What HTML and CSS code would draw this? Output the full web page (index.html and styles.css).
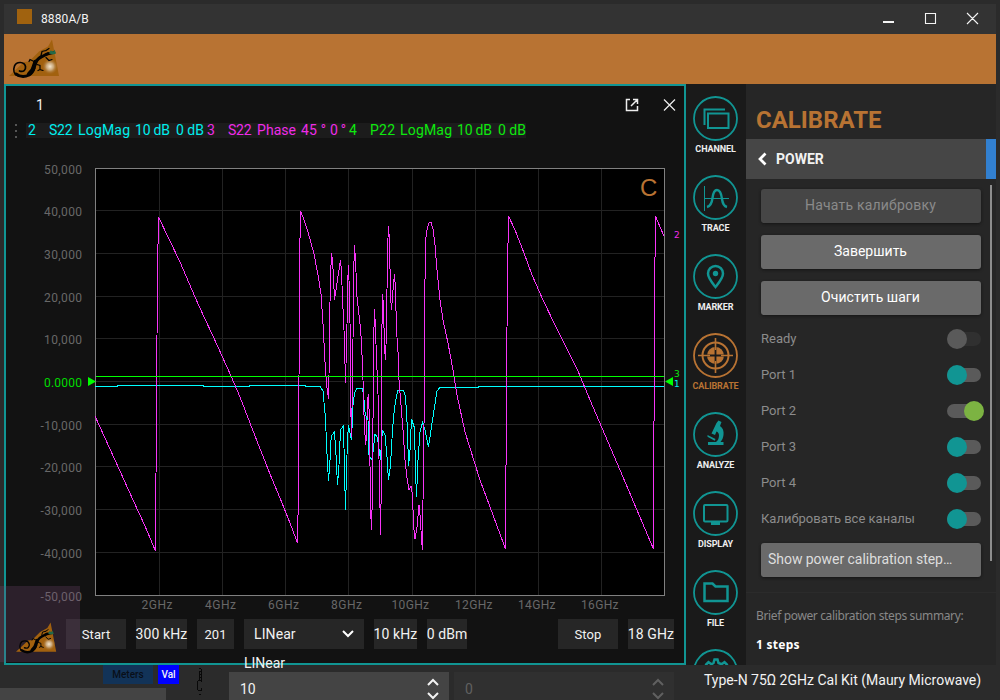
FILE: index.html
```html
<!DOCTYPE html>
<html lang="en">
<head>
<meta charset="utf-8">
<title>8880A/B</title>
<link rel="stylesheet" href="styles.css">
</head>
<body>
<svg class="defs" aria-hidden="true">
  <symbol id="gecko" viewBox="0 0 51 40">
    <path class="hill" d="M0 36.5 L8 29 L15 22.5 L20 22 L30 12 L39 7 L43 0 L50 36.5Z"/>
    <circle cx="41" cy="27" r="8" fill="url(#orb)"/>
    <g class="lizard">
      <path d="M10.500 31.500c4 1.500 6.500-1 6-4.500c-1-5-9-5.500-11-.5c-1.500 4-.5 8 3 9.500" stroke-width="1.700"/>
      <path d="M7 34.500q6 4.500 13 1q4-2.500 5-7" stroke-width="3"/>
      <path d="M20 34.500q4.500-4 5-8l1.500-4" stroke-width="4.200"/>
      <path d="M26 23.500q3-5 7-6.500l6-3" stroke-width="3"/>
      <path d="M25 22l-4-2l-1 2M28 25l3 1v4l3 1M31 30l-2 1M32 16l1-4l4-1M37 11l3-2M37 18l3 3l3-1" stroke-width="1.200"/>
      <path d="M37 15l8-2" stroke-width="2.600"/>
    </g>
    <path class="leaf" d="M40 14l1.500-3 3 1 1-2 1.500 4-3 1z"/>
  </symbol>
  <radialGradient id="orb"><stop offset="0" stop-color="#f4e6cd"/><stop offset=".45" stop-color="#c9a679"/><stop offset="1" stop-color="#a2651c" stop-opacity="0"/></radialGradient>
</svg>
<div class="window">
  <header class="titlebar">
    <span class="app-icon"></span><span class="title">8880A/B</span>
    <svg class="win-buttons" width="98" height="16" viewBox="0 0 98 16"><path d="M43.500 3.500h10v10h-10zM85 3l11 11M96 3l-11 11"/><path class="min" d="M1 12h11"/></svg>
  </header>
  <div class="banner"><svg class="logo"><use href="#gecko"/></svg></div>
  <main class="main">
    <section class="channel">
      <div class="channel-head">
        <span class="channel-no">1</span>
        <svg width="54" height="16" viewBox="0 0 54 16"><path class="ic" d="M6 2.500H2.500V13.500H13.500V9M9 2.500h4.500V7M13 3L7 9"/><path class="ic thin" d="M40 2.500l11 11M51 2.500l-11 11"/></svg>
      </div>
      <div class="traces">
        <svg width="4" height="14" class="grip"><path d="M1 0h2v2H1zM1 6h2v2H1zM1 12h2v2H1z"/></svg>
        <svg class="trace-line" width="500" height="15" viewBox="26 0 500 15">
          <g class="t-cyan"><text x="28" y="11.500" textLength="8">2</text><text x="49" y="11.500" textLength="23.500">S22</text><text x="78" y="12" textLength="52">LogMag</text><text x="135" y="11.500" textLength="35">10 dB</text><text x="176" y="11.500" textLength="28">0 dB</text></g>
          <g class="t-mag"><text x="207" y="11.500" textLength="8">3</text><text x="228" y="11.500" textLength="23.500">S22</text><text x="257" y="12" textLength="39">Phase</text><text x="301" y="11.500" textLength="25">45 °</text><text x="330" y="11.500" textLength="16">0 °</text></g>
          <g class="t-green"><text x="349" y="11.500" textLength="8">4</text><text x="370" y="11.500" textLength="25">P22</text><text x="400" y="12" textLength="52">LogMag</text><text x="457" y="11.500" textLength="35">10 dB</text><text x="498" y="11.500" textLength="28">0 dB</text></g>
        </svg>
      </div>
      <svg class="chart" width="678" height="460" viewBox="6 155 678 460">
        <rect x="95.500" y="168.500" width="569" height="427" fill="#000"/>
        <path class="grid" d="M159.500 169v426M222.500 169v426M285.500 169v426M348.500 169v426M412.500 169v426M475.500 169v426M538.500 169v426M601.500 169v426M96 210.500h568M96 253.500h568M96 296.500h568M96 338.500h568M96 381.500h568M96 424.500h568M96 466.500h568M96 509.500h568M96 552.500h568"/>
        <rect class="frame" x="95.500" y="168.500" width="569" height="427"/>
        <polyline class="line cyan" points="95,386.500 117,386.500 117,385.500 203,385.500 203,386.500 249,386.500 250,385.500 305,385.500 306,386.500 320,386.500 323,391 324.500,408 325.500,418 326.500,444 327.500,463 328.500,481 329.700,466 331,440 332,435 334.500,432 336,455 337.500,485 339,465 340.500,430 342,428 343.500,425 344.500,470 345.500,510 346.500,470 347.500,440 348.500,425 350,433 351.500,440 353,405 354.500,393 357,388.500 362,388.500 363.500,394 365,412 367,420 367.500,403 368,420 369,455 370,457 372,460 373.500,448 375,434 377,437 378.500,445 380.500,460 381.500,440 382.700,431 385,435 387,457 388.500,480 390.500,465 392.500,430 394.500,408 397.500,391 403.500,390.500 405.500,396 407.500,430 408.500,466 410,450 411.500,419 414.500,428 415.500,470 416.500,497 418,460 420,432 422.700,422 425.500,432 428.500,447 431,430 434,410 437,391 440,387.500 478,387.500 478,386.500 664,386.500"/>
        <polyline class="line mag" points="95,416 105,438 120,471 133,500 145,526 155.500,551 156.500,400 157.500,273 158.500,217 169,239 180,262 195,297 205,319 213,336 231,376 240,397 255,436 270,474 280,498 290,523 297.500,543 298.500,489 299.500,267 300.500,211 303,217 308,232 314,254 318,275 321,294 323,324 325.500,371 327,388 328.500,399 329,376 329.500,327 330.500,278 331.500,253 332.500,260 333.500,277 334.500,300 337,283 339,270 340.500,260 341.500,272 342.500,298 344,330 345,364 345.500,383 347,325 347.500,285 348.500,265 349.500,295 350.500,350 350.800,408 351.500,437 352.500,380 353,340 353.500,278 354.500,245 355.500,260 357,297 360,324 361.500,342 363,380 364,415 365.500,445 366.500,438 367.500,400 368.500,394 369.500,423 370.500,508 371.500,530 372.500,490 373,420 373.500,346 374.500,309 375.500,328 376.500,360 377.500,380 378.500,408 379,459 380,508 380.500,535 381.500,475 381.500,355 382.500,294 383.500,306 384.500,348 385.500,360 386.500,330 387.500,250 388.500,226 389.500,241 390.500,295 391.500,310 393,290 394.500,274 395.500,290 396.500,330 398,352 399,380 401,405 403,430 405,460 407,478 409,490 411,486 412.500,495 413.500,525 415,539 417,527 419,505 420.500,520 421.500,540 422.500,550 423,500 423.500,470 424.500,380 424.800,296 425.500,241 427,230 428.700,223 431,222.500 433,229 435,245 437,270 440,300 443,320 448,343 453,370 457,395 465,432 480,480 493,515 505.500,549 506.500,385 507.500,272 508.500,216 515,230 524,253 532,275 543,300 555,325 565,345 578,371 590,400 620,470 653.500,549 654.500,300 655.500,216 660,227 664,236"/>
        <path class="line green" d="M96 376.500h568"/>
        <path class="arrow" d="M88 377v9l8-4.500zM673 377v9l-8-4.500z"/>
        <g class="axis y">
          <text x="44" y="173.500" textLength="38">50,000</text><text x="44" y="216" textLength="38">40,000</text><text x="44" y="259" textLength="38">30,000</text><text x="44" y="301.500" textLength="38">20,000</text><text x="44" y="344" textLength="38">10,000</text><text class="zero" x="44" y="387" textLength="38">0.0000</text><text x="40.500" y="429.500" textLength="41.500">-10,000</text><text x="40.500" y="472" textLength="41.500">-20,000</text><text x="40.500" y="515" textLength="41.500">-30,000</text><text x="40.500" y="557.500" textLength="41.500">-40,000</text><text x="40.500" y="600.500" textLength="41.500">-50,000</text>
        </g>
        <g class="axis x">
          <text x="141.500" y="609" textLength="31">2GHz</text><text x="205" y="609" textLength="31">4GHz</text><text x="268" y="609" textLength="31">6GHz</text><text x="331" y="609" textLength="31">8GHz</text><text x="391.500" y="609" textLength="37.500">10GHz</text><text x="455" y="609" textLength="37.500">12GHz</text><text x="518" y="609" textLength="37.500">14GHz</text><text x="581" y="609" textLength="37.500">16GHz</text>
        </g>
        <text class="corr" x="640" y="196">C</text>
        <g class="tags"><text class="t-mag" x="674" y="238">2</text><text class="t-green" x="674" y="377">3</text><text class="t-cyan" x="674" y="387">1</text></g>
      </svg>
      <div class="controls">
        <span class="key w60">Start</span><span class="key w51">300 kHz</span><span class="key w37">201</span>
        <span class="key select">LINear<svg width="14" height="10"><path d="M2 2l5 5 5-5"/></svg></span>
        <span class="key w43">10 kHz</span><span class="key w40">0 dBm</span><span class="key w60 push">Stop</span><span class="key w46">18 GHz</span>
      </div>
    </section>
    <nav class="nav">
      <div class="item"><svg viewBox="0 0 45 45"><circle class="ring" cx="22.500" cy="22.500" r="21.500"/><path class="o" d="M11.500 29V13.500H32M15 17.500h20.500v14.500H15z"/></svg><span>CHANNEL</span></div>
      <div class="item"><svg viewBox="0 0 45 45"><circle class="ring" cx="22.500" cy="22.500" r="21.500"/><path class="o fine" d="M11.500 11v25M11 23.500h25"/><path class="o bold" d="M14 32c4-1 5-5 5.500-9s1.500-8 4.500-8 4.500 5 5 9 1.500 7 5 8"/></svg><span>TRACE</span></div>
      <div class="item"><svg viewBox="0 0 45 45"><circle class="ring" cx="22.500" cy="22.500" r="21.500"/><path class="o mid" d="M22.500 33c-4-5-7.500-9-7.500-13.500a7.500 7.500 0 0 1 15 0c0 4.500-3.500 8.500-7.500 13.500z"/><circle class="f" cx="22.500" cy="19.500" r="2.700"/></svg><span>MARKER</span></div>
      <div class="item active"><svg viewBox="0 0 45 45"><circle class="ring" cx="22.500" cy="22.500" r="21.500"/><circle class="o" cx="22.500" cy="22.500" r="13"/><circle class="f" cx="22.500" cy="22.500" r="8.500"/><path class="gap" d="M22.500 13v19M13 22.500h19"/><path class="o thinner" d="M22.500 5v12M22.500 28v12M5 22.500h12M28 22.500h12"/></svg><span>CALIBRATE</span></div>
      <div class="item"><svg viewBox="0 0 45 45"><circle class="ring" cx="22.500" cy="22.500" r="21.500"/><path class="f" d="M25.500 8.500l3 1.500-1.500 4c3 2 4 5 3.500 9-.3 3-1.500 5-3 7h3v3H15v-3h8c2-1.500 3-4 3-6.500 0-2-1-3.500-2.500-4l-1.500 3.500-3.500-1.500 5-10.500zM14.500 23l8 4-.8 1.800-7.200-4z"/></svg><span>ANALYZE</span></div>
      <div class="item"><svg viewBox="0 0 45 45"><circle class="ring" cx="22.500" cy="22.500" r="21.500"/><rect class="o" x="11" y="14" width="23.500" height="16.500" rx="1"/><path class="f" d="M18 31h9v3h-9z"/></svg><span>DISPLAY</span></div>
      <div class="item"><svg viewBox="0 0 45 45"><circle class="ring" cx="22.500" cy="22.500" r="21.500"/><path class="o mid" d="M11.500 13.500h8l3 3h12V31h-23z"/></svg><span>FILE</span></div>
      <div class="item"><svg viewBox="0 0 45 45"><circle class="ring" cx="22.500" cy="22.500" r="21.500"/><path class="o mid" d="M20.500 14l1-3.500h3l1 3.500 3 1.200 3-2 2.300 2.300-2 3 1.200 3 3 1v3h-25v-3l3-1 1.200-3-2-3 2.300-2.300 3 2z"/></svg></div>
    </nav>
    <aside class="panel">
      <h1>CALIBRATE</h1>
      <div class="crumb"><svg width="12" height="16" viewBox="0 0 12 16"><path d="M9.500 2.500L4 8l5.500 5.500"/></svg><span>POWER</span><i></i></div>
      <div class="scroll">
        <div class="form">
          <button class="btn off">Начать калибровку</button>
          <button class="btn">Завершить</button>
          <button class="btn last">Очистить шаги</button>
          <div class="row"><span>Ready</span><i class="toggle dim"></i></div>
          <div class="row"><span>Port 1</span><i class="toggle"></i></div>
          <div class="row"><span>Port 2</span><i class="toggle on"></i></div>
          <div class="row"><span>Port 3</span><i class="toggle"></i></div>
          <div class="row"><span>Port 4</span><i class="toggle"></i></div>
          <div class="row"><span>Калибровать все каналы</span><i class="toggle"></i></div>
          <button class="btn soft">Show power calibration step…</button>
        </div>
        <i class="bar"></i>
      </div>
      <div class="summary"><p>Brief power calibration steps summary:</p><b>1 steps</b></div>
    </aside>
  </main>
  <footer class="footer">
    <div class="foot-left">
      <div class="chips"><span class="chip meters">Meters</span><span class="chip val">Val</span></div>
      <div class="strip"></div>
    </div>
    <svg class="probe" width="12" height="32"><path d="M5 3.500h2M7.500 4v2M5.500 7v9M7.500 6v11M5 6.500h3M5 9.500h3M5 12.500h3M4 15.500h4M3.500 16v9M4 25.500h3M7.500 23v3M5 29.500h2"/></svg>
    <div class="spin">10<svg width="14" height="26"><path d="M2 9l5-5 5 5M2 17l5 5 5-5"/></svg></div>
    <div class="spin idle">0<svg width="14" height="26"><path d="M2 9l5-5 5 5M2 17l5 5 5-5"/></svg></div>
    <div class="kit">Type-N 75Ω 2GHz Cal Kit (Maury Microwave)</div>
  </footer>
  <div class="float-label">LINear</div>
  <div class="ghost"><svg><use href="#gecko"/></svg></div>
</div>
</body>
</html>
```
FILE: styles.css
```css
* { box-sizing: border-box; }
body { margin: 0; font-family: Roboto, "Liberation Sans", sans-serif; font-size: 14px; color: #f2f2f2; background: #2b2b2b; overflow: hidden; }
.defs { position: absolute; width: 0; height: 0; }
.window { position: relative; width: 1000px; height: 700px; padding: 4px 4px 0; display: flex; flex-direction: column; overflow: hidden; }
.titlebar { height: 30px; flex: none; background: #333; display: flex; align-items: center; padding: 0 16px 0 13px; font-size: 12px; }
.app-icon { width: 15px; height: 15px; background: #a0620f; margin: -5px 9px 0 0; }
.title { letter-spacing: .1px; }
.win-buttons { margin-left: auto; margin-top: -2px; }
.win-buttons path { fill: none; stroke: #f4f4f4; stroke-width: 1.1; }
.win-buttons .min { stroke-width: 2; }
.banner { height: 50px; flex: none; background: #b87333; padding: 5px; }
.logo { width: 51px; height: 41px; display: block; }
.hill { fill: #a2610f; }
.lizard { fill: none; stroke: #030303; stroke-linecap: round; }
.leaf { fill: #246a49; }
.main { height: 581px; flex: none; display: grid; grid-template-columns: 682px 60px 250px; grid-template-rows: 581px; }
.channel { border: 2px solid #119593; background: #121212; display: flex; flex-direction: column; min-width: 0; }
.channel-head { height: 36px; flex: none; display: flex; justify-content: space-between; align-items: center; padding: 2px 6px 0 30px; }
.ic { fill: none; stroke: #eee; stroke-width: 1.5; }
.thin { stroke-width: 1.2; }
.traces { height: 33px; flex: none; display: flex; align-items: flex-start; padding: 1px 0 0 8px; gap: 8px; }
.grip { fill: #555; margin-top: 1px; }
.trace-line { background: #1c1c1c; overflow: visible; font-size: 14px; }
.t-cyan { fill: #00eeee; }
.t-mag { fill: #ef2ce8; }
.t-green { fill: #0ee80e; }
.chart { flex: none; display: block; }
.grid { stroke: #222; fill: none; shape-rendering: crispEdges; }
.frame { fill: none; stroke: #808080; shape-rendering: crispEdges; }
.line { fill: none; stroke-width: 1; shape-rendering: crispEdges; }
.cyan { stroke: #0ff; }
.mag { stroke: #f734f7; }
.green { stroke: #0f0; }
.arrow { fill: #0f0; }
.axis { font-size: 12px; fill: #686868; }
.zero { fill: #0d0; }
.corr { font: 24px "Liberation Sans", sans-serif; fill: #b87333; }
.tags { font: 9px "DejaVu Sans", sans-serif; }
.controls { display: flex; gap: 10px; padding: 4px 10px 0 60px; }
.key { height: 30px; background: #262626; display: flex; align-items: center; justify-content: center; white-space: nowrap; letter-spacing: .1px; }
.w60 { width: 60px; font-size: 13px; }
.w51 { width: 51px; }
.w37 { width: 37px; font-size: 13px; }
.w43 { width: 43px; }
.w40 { width: 40px; }
.w46 { width: 46px; }
.push { margin-left: auto; }
.select { width: 120px; justify-content: space-between; padding: 0 9px 0 10px; }
.select path { fill: none; stroke: #fff; stroke-width: 2; }
.nav { background: #1a1a1a; overflow: hidden; padding-top: 12px; }
.item { height: 79px; display: flex; flex-direction: column; align-items: center; color: #119593; font-size: 9px; font-weight: 700; letter-spacing: -.1px; padding-right: 1px; }
.item svg { width: 45px; height: 45px; flex: none; }
.item span { color: #eee; margin-top: 3px; line-height: 11px; }
.active, .active span { color: #b87333; }
.ring, .o { fill: none; stroke: currentColor; stroke-width: 2; }
.ring { stroke-width: 1.8; }
.fine { stroke-width: 1; }
.mid { stroke-width: 2.5; }
.bold { stroke-width: 2.4; }
.thinner { stroke-width: 1.6; }
.f { fill: currentColor; }
.gap { stroke: #1a1a1a; stroke-width: 1.8; }
.panel { background: #262626; display: flex; flex-direction: column; overflow: hidden; }
h1 { margin: 0; height: 55px; flex: none; padding: 22px 0 0 10px; font-size: 24px; line-height: 28px; font-weight: 700; color: #b87333; }
.crumb { height: 40px; flex: none; background: #464646; display: flex; align-items: center; padding-left: 10px; font-weight: 700; font-size: 14px; }
.crumb svg path { fill: none; stroke: #fff; stroke-width: 2.7; }
.crumb span { margin-left: 8px; }
.crumb i { width: 10px; height: 40px; margin-left: auto; background: #3280d0; }
.scroll { height: 414px; flex: none; display: flex; border-bottom: 1px solid #2b2b2b; }
.form { width: 235px; padding: 10px 0 0 15px; }
.bar { width: 2px; height: 376px; margin: 6px 0 0 9px; background: #8e8e8e; }
.btn { display: block; width: 220px; height: 34px; margin: 0 0 12px; padding: 0 1px 2px 0; border: 0; border-radius: 3px; background: #6a6a6a; color: #fff; font: 14px Roboto, sans-serif; box-shadow: 0 1px 3px #151515; }
.off { background: #464646; color: #8a8a8a; letter-spacing: .2px; }
.last { margin-bottom: 6px; letter-spacing: .05px; }
.soft { margin-top: 6px; color: #ddd; white-space: nowrap; text-align: left; padding-left: 7px; letter-spacing: -.04px; }
.row { height: 36px; display: flex; align-items: center; justify-content: space-between; color: #8c8c8c; font-size: 13px; padding-bottom: 1px; }
.toggle { width: 34px; height: 14px; border-radius: 7px; background: #5a5a5a; display: flex; align-items: center; margin-top: 1px; }
.toggle::before { content: ""; width: 20px; height: 20px; flex: none; border-radius: 50%; background: #119593; }
.on::before { background: #7cb342; margin-left: 17px; }
.dim { background: #303030; }
.dim::before { background: #5a5a5a; }
.summary { padding: 14px 10px 0; font: 12px "Noto Sans", sans-serif; }
.summary p { margin: 0 0 12px; line-height: 17px; color: #888; letter-spacing: -.36px; white-space: nowrap; }
.summary b { line-height: 17px; color: #fff; letter-spacing: .25px; }
.footer { height: 35px; flex: none; display: flex; margin-left: -4px; }
.foot-left { width: 194px; display: flex; flex-direction: column; justify-content: space-between; }
.chips { display: flex; gap: 5px; padding-left: 103px; }
.chip { height: 19px; font-size: 10px; font-weight: 500; display: flex; align-items: center; justify-content: center; }
.meters { width: 50px; background: #123358; color: #090f19; }
.val { width: 21px; background: #00f; }
.strip { width: 166px; height: 12px; background: #444; }
.probe { margin-right: 23px; }
.probe path { stroke: #080808; fill: none; shape-rendering: crispEdges; }
.spin { width: 220px; height: 28px; margin-top: 7px; flex: none; background: #444; display: flex; justify-content: space-between; padding: 9px 9px 0 11px; font-size: 14px; line-height: 16px; }
.spin svg { margin-top: -5px; }
.spin svg path { fill: none; stroke: currentColor; stroke-width: 2; }
.idle { background: #303030; color: #606060; margin-left: 5px; }
.kit { padding-top: 7px; line-height: 16px; margin-left: 30px; font-size: 14px; white-space: nowrap; }
.float-label { position: absolute; left: 244px; top: 655px; line-height: 16px; font-size: 14px; }
.ghost { position: absolute; left: 0; top: 586px; width: 80px; height: 76px; background: rgba(122, 74, 118, .25); padding: 36px 0 0 16px; }
.ghost svg { width: 41px; height: 33px; display: block; }
```
